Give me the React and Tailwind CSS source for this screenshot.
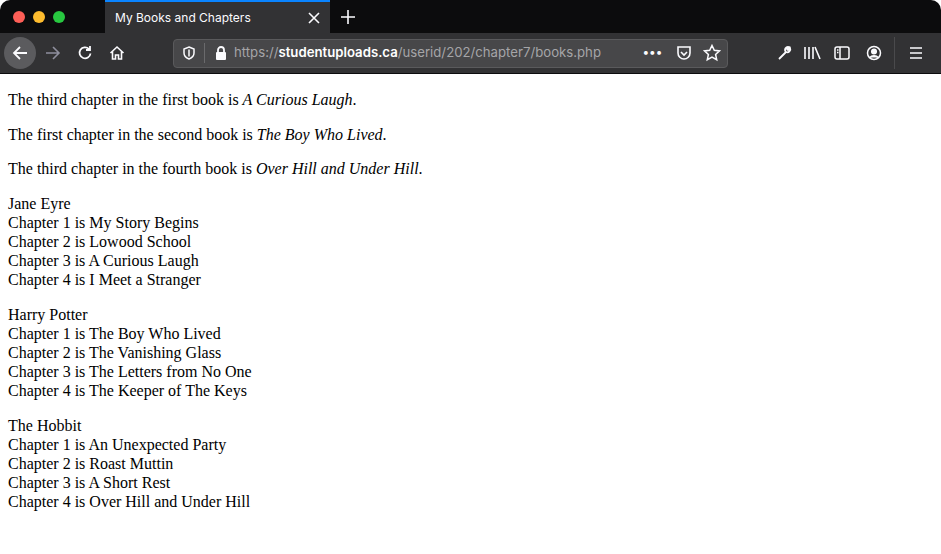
import React from "react";

const ic = "stroke-[#fbfbfe] fill-none";
export default function App() {
  const chap = (t) => <>{t}<br /></>;
  return (
    <div className="w-[941px] h-[554px] bg-white overflow-hidden">
      <div className="bg-[#0c0c0d] rounded-t-[10px]">
        <div className="h-[33px] flex items-center" style={{ fontFamily: "Inter, 'Noto Sans', sans-serif" }}>
          <div className="flex gap-2 pl-[13px] w-[105px]">
            <span className="w-3 h-3 rounded-full bg-[#fe5f57]" />
            <span className="w-3 h-3 rounded-full bg-[#febc2e]" />
            <span className="w-3 h-3 rounded-full bg-[#28c840]" />
          </div>
          <div className="w-[225px] h-[33px] bg-[#323234] border-t-2 border-[#0a84ff] flex items-center justify-between px-[10px] text-[12px] text-[#fbfbfe]">
            <span>My Books and Chapters</span>
            <svg width="12" height="12" viewBox="0 0 12 12" className={ic} strokeWidth="1.6"><path d="M1 1l10 10M11 1L1 11" /></svg>
          </div>
          <svg width="14" height="14" viewBox="0 0 14 14" className={`${ic} ml-[11px]`} strokeWidth="1.6"><path d="M7 0v14M0 7h14" /></svg>
        </div>
        <div className="h-[41px] bg-[#323234] flex items-center border-b border-[#0c0c0d]" style={{ fontFamily: "Inter, 'Noto Sans', sans-serif" }}>
          <div className="ml-[4px] w-[32px] h-[32px] rounded-full bg-[#5b5b5e] flex items-center justify-center">
            <svg width="18" height="18" viewBox="0 0 18 18" className={ic} strokeWidth="1.8"><path d="M16 9H3M9 3L3 9l6 6" /></svg>
          </div>
          <svg width="18" height="18" viewBox="0 0 18 18" className="stroke-[#8f8f9d] fill-none ml-[8px]" strokeWidth="1.6"><path d="M2 9h13M9 3l6 6-6 6" /></svg>
          <svg width="16" height="16" viewBox="0 0 16 16" className={`${ic} ml-[15px]`} strokeWidth="1.8"><path d="M13.5 8.5A5.5 5.5 0 1 1 12 4M13 1v4H9" /></svg>
          <svg width="16" height="16" viewBox="0 0 16 16" className={`${ic} ml-[16px]`} strokeWidth="1.6"><path d="M1.5 8L8 2l6.5 6M3.5 6.5V14h3v-4h3v4h3V6.5" /></svg>
          <div className="ml-[48px] w-[555px] h-[29px] bg-[#474749] rounded-[4px] border border-[#5a5a5c] flex items-center text-[13.2px]">
            <svg width="14" height="14" viewBox="0 0 14 14" className="stroke-[#fbfbfe] fill-none ml-[8px]" strokeWidth="1.5"><path d="M7 1l5 2v4c0 3-2.5 5-5 6-2.5-1-5-3-5-6V3z" /><path d="M7 3.5v7" /></svg>
            <span className="w-px h-[20px] bg-[#6a6a6c] ml-[8px]" />
            <svg width="14" height="16" viewBox="0 0 14 16" className="ml-[9px]"><path d="M4 7V5a3 3 0 0 1 6 0v2" stroke="#fbfbfe" strokeWidth="1.8" fill="none" /><rect x="2" y="7" width="10" height="8" rx="1" fill="#fbfbfe" /></svg>
            <span className="ml-[6px] text-[#a5a5a8]">https://<span className="text-white font-semibold">studentuploads.ca</span>/userid/202/chapter7/books.php</span>
            <span className="ml-auto text-[#fbfbfe] tracking-[1px] text-[12px] font-bold mb-[3px]">•••</span>
            <svg width="18" height="18" viewBox="0 0 18 18" className={`${ic} ml-[12px]`} strokeWidth="1.6"><path d="M3 3h12v6a6 6 0 0 1-12 0z" /><path d="M6 8l3 3 3-3" /></svg>
            <svg width="18" height="18" viewBox="0 0 18 18" className={`${ic} ml-[10px] mr-[6px]`} strokeWidth="1.5"><path d="M9 1.5l2.3 4.8 5.2.6-3.9 3.6 1.1 5.2L9 13.1l-4.7 2.6 1.1-5.2L1.5 6.9l5.2-.6z" /></svg>
          </div>
          <svg width="16" height="16" viewBox="0 0 16 16" className={`${ic} ml-[49px]`} strokeWidth="1.8"><path d="M2 14l7-7M9 7a3 3 0 0 0 4-4l-2 2-1-1 2-2a3 3 0 0 0-3 5" /></svg>
          <svg width="18" height="16" viewBox="0 0 18 16" className={`${ic} ml-[10px]`} strokeWidth="1.6"><path d="M2 2v12M6 2v12M10 2v12M12 2l5 12" /></svg>
          <svg width="16" height="16" viewBox="0 0 16 16" className={`${ic} ml-[13px]`} strokeWidth="1.5"><rect x="1" y="2" width="14" height="12" rx="2" /><path d="M6 2v12M3 5h1.5M3 7.5h1.5" /></svg>
          <svg width="16" height="16" viewBox="0 0 16 16" className={`${ic} ml-[16px]`} strokeWidth="1.5"><circle cx="8" cy="8" r="6.5" /><circle cx="8" cy="6.5" r="2.3" fill="#fbfbfe" /><path d="M4 12.5c1.5-2.5 6.5-2.5 8 0" fill="#fbfbfe" /></svg>
          <span className="w-px h-[32px] bg-[#4a4a4c] ml-[12px]" />
          <svg width="14" height="14" viewBox="0 0 14 14" className={`${ic} ml-[14px]`} strokeWidth="1.6"><path d="M1 2h12M1 7h12M1 12h12" /></svg>
        </div>
      </div>
      <div className="p-[8px] text-[16px] leading-[19px] text-black" style={{ fontFamily: "'Liberation Serif', serif" }}>
        <p className="mt-[8px]">The third chapter in the first book is <i>A Curious Laugh</i>.</p>
        <p className="mt-[15.5px]">The first chapter in the second book is <i>The Boy Who Lived</i>.</p>
        <p className="mt-[15.5px]">The third chapter in the fourth book is <i>Over Hill and Under Hill</i>.</p>
        <p className="mt-[15.5px]">Jane Eyre<br />{chap("Chapter 1 is My Story Begins")}{chap("Chapter 2 is Lowood School")}{chap("Chapter 3 is A Curious Laugh")}Chapter 4 is I Meet a Stranger</p>
        <p className="mt-[16px]">Harry Potter<br />{chap("Chapter 1 is The Boy Who Lived")}{chap("Chapter 2 is The Vanishing Glass")}{chap("Chapter 3 is The Letters from No One")}Chapter 4 is The Keeper of The Keys</p>
        <p className="mt-[16px]">The Hobbit<br />{chap("Chapter 1 is An Unexpected Party")}{chap("Chapter 2 is Roast Muttin")}{chap("Chapter 3 is A Short Rest")}Chapter 4 is Over Hill and Under Hill</p>
      </div>
    </div>
  );
}
